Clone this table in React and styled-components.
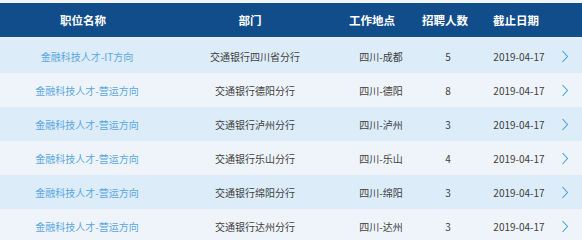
import styled, { createGlobalStyle } from "styled-components";

const GlobalStyle = createGlobalStyle`
  body {
    margin: 0;
    background: #f2f6fa;
    font-family: "Noto Sans CJK SC", "Noto Sans", sans-serif;
  }
`;

const Wrap = styled.div`
  width: 582px;
  padding-top: 3px;
`;

const HeaderRow = styled.div`
  display: grid;
  grid-template-columns: 166px 168px 76px 70px 72px 1fr;
  height: 34px;
  align-items: center;
  background: #124d8b;
  border-bottom: 2px solid #e4edf6;
  color: #fff;
  font-size: 11.5px;
  font-weight: bold;
`;

const HeadCell = styled.div`
  text-align: center;
  white-space: nowrap;
`;

const Row = styled.div`
  display: grid;
  grid-template-columns: 174px 162px 90px 44px 86px 1fr;
  height: 34px;
  align-items: center;
  background: ${(p) => (p.$alt ? "#eef4fa" : "#dcecf9")};
  font-size: 10px;
  color: #404040;
`;

const Cell = styled.div`
  text-align: center;
  white-space: nowrap;
  padding-left: ${(p) => p.$shift || 0}px;
`;

const JobLink = styled(Cell)`
  color: #5aa7e3;
`;

const Arrow = styled.div`
  display: flex;
  align-items: center;
  padding-left: 5px;
`;

const jobs = [
  ["金融科技人才-IT方向", "交通银行四川省分行", "四川-成都", 5],
  ["金融科技人才-营运方向", "交通银行德阳分行", "四川-德阳", 8],
  ["金融科技人才-营运方向", "交通银行泸州分行", "四川-泸州", 3],
  ["金融科技人才-营运方向", "交通银行乐山分行", "四川-乐山", 4],
  ["金融科技人才-营运方向", "交通银行绵阳分行", "四川-绵阳", 3],
  ["金融科技人才-营运方向", "交通银行达州分行", "四川-达州", 3],
];

export default function App() {
  return (
    <>
      <GlobalStyle />
      <Wrap>
        <HeaderRow>
          <HeadCell>职位名称</HeadCell>
          <HeadCell>部门</HeadCell>
          <HeadCell>工作地点</HeadCell>
          <HeadCell>招聘人数</HeadCell>
          <HeadCell>截止日期</HeadCell>
          <div />
        </HeaderRow>
        {jobs.map((j, i) => (
          <Row key={i} $alt={i % 2 === 1}>
            <JobLink>{j[0]}</JobLink>
            <Cell>{j[1]}</Cell>
            <Cell>{j[2]}</Cell>
            <Cell>{j[3]}</Cell>
            <Cell $shift={12}>2019-04-17</Cell>
            <Arrow>
              <svg width="8" height="13" viewBox="0 0 8 13">
                <path d="M1.5 1 L6.5 6.5 L1.5 12" fill="none" stroke="#45a0e8" strokeWidth="1.1" />
              </svg>
            </Arrow>
          </Row>
        ))}
      </Wrap>
    </>
  );
}
